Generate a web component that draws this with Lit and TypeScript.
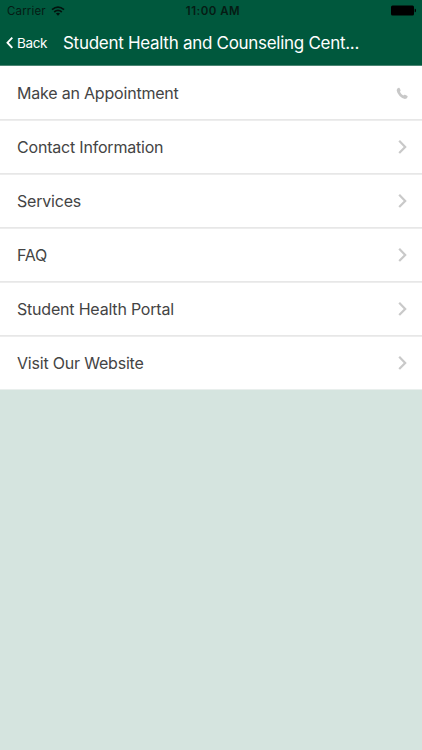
import { LitElement, html, css, svg } from "lit";
import { customElement, property } from "lit/decorators.js";

type Icon = "phone" | "chevron";

const chevron = svg`<path d="M5.200 3.700 L11.200 9.900 L5.200 16.100" fill="none" stroke="#c9c9c9" stroke-width="2.200"/>`;
const phone = svg`<path fill="#c8c8c8" d="M3.400 5.500 Q4.200 4.600 5.200 4.800 Q5.800 5 6.500 6.900 Q6.800 7.700 6.300 8.200 L5.900 8.700 Q6.900 11 9.300 12.400 L9.900 11.900 Q10.400 11.500 11 11.800 L13.100 12.800 Q13.900 13.200 13.600 14 Q12.900 15.900 10.900 15.900 Q8.200 15.700 5.600 13 Q3 10.200 2.700 7.500 Q2.700 6.300 3.400 5.500Z"/>`;

@customElement("list-row")
class ListRow extends LitElement {
  @property() label = "";
  @property() icon: Icon = "chevron";
  static styles = css`
    :host {
      display: flex;
      align-items: center;
      justify-content: space-between;
      box-sizing: border-box;
      height: 54px;
      padding: 0 12px 0 17px;
      background: #fff;
      border-top: 1px solid #ededed;
      border-bottom: 1px solid #e7e7e7;
      color: #444;
      font-size: 16px;
      letter-spacing: -0.2px;
      line-height: 22px;
    }
    :host(:first-child) {
      border-top-color: #fff;
    }
    :host(:last-child) {
      border-bottom-color: #e9efed;
    }
    .icon {
      width: 16px;
      height: 20px;
      flex: none;
    }
  `;
  render() {
    return html`<span class="label">${this.label}</span>
      <svg class="icon" viewBox="0 0 16 20">${this.icon === "phone" ? phone : chevron}</svg>`;
  }
}

@customElement("app-root")
class AppRoot extends LitElement {
  static styles = css`
    :host {
      display: block;
      min-height: 100vh;
      background: #d5e4df;
      font-family: Inter, "Liberation Sans", sans-serif;
    }
    header {
      box-sizing: border-box;
      height: 66px;
      background: #00583d;
      border-bottom: 1px solid #4b8573;
    }
    .status {
      display: grid;
      grid-template-columns: 1fr auto 1fr;
      align-items: center;
      height: 22px;
      padding: 0 5px 0 7px;
      color: #061b14;
      font-size: 11.5px;
    }
    .carrier {
      display: flex;
      align-items: center;
      gap: 5px;
      letter-spacing: 0.15px;
    }
    .time {
      padding-left: 2px;
      font-weight: 600;
      letter-spacing: 0.5px;
    }
    .wifi {
      width: 14px;
      height: 10px;
      margin-top: -1px;
    }
    .battery {
      width: 26px;
      height: 11px;
      margin-top: -1px;
      justify-self: end;
    }
    .nav {
      display: flex;
      align-items: center;
      height: 42px;
      padding-left: 6px;
      color: #fff;
    }
    .back {
      display: flex;
      align-items: center;
      width: 57px;
      gap: 3px;
      font-size: 13.5px;
      letter-spacing: -0.35px;
    }
    .arrow {
      width: 8px;
      height: 14px;
      flex: none;
    }
    .title {
      margin: 0;
      font-size: 17px;
      font-weight: 400;
      letter-spacing: -0.29px;
      white-space: nowrap;
    }
  `;
  render() {
    return html`
      <header>
        <div class="status">
          <div class="carrier">
            <span>Carrier</span>
            <svg class="wifi" viewBox="0 0 14 10">
              <g fill="none" stroke="#03130e" stroke-width="1.7">
                <path d="M1 3.700 Q7 -1.500 13 3.700" />
                <path d="M3.200 6 Q7 2.700 10.800 6" />
              </g>
              <path d="M4.900 7.500 Q7 5.800 9.100 7.500 L7 9.700Z" fill="#03130e" />
            </svg>
          </div>
          <span class="time">11:00 AM</span>
          <svg class="battery" viewBox="0 0 26 11">
            <rect y=".5" width="23" height="10" rx="1.500" />
            <path d="M23.700 3.700h.5q.8 0 .8 1.800t-.8 1.800h-.5z" />
          </svg>
        </div>
        <div class="nav">
          <div class="back">
            <svg class="arrow" viewBox="0 0 8 14">
              <path d="M6.300 1.600 L1.500 6.700 L6.300 11.800" fill="none" stroke="#fff" stroke-width="1.900" />
            </svg>
            <span>Back</span>
          </div>
          <h1 class="title">Student Health and Counseling Cent...</h1>
        </div>
      </header>
      <main>
        <list-row label="Make an Appointment" icon="phone"></list-row>
        <list-row label="Contact Information"></list-row>
        <list-row label="Services"></list-row>
        <list-row label="FAQ"></list-row>
        <list-row label="Student Health Portal"></list-row>
        <list-row label="Visit Our Website"></list-row>
      </main>
    `;
  }
}
